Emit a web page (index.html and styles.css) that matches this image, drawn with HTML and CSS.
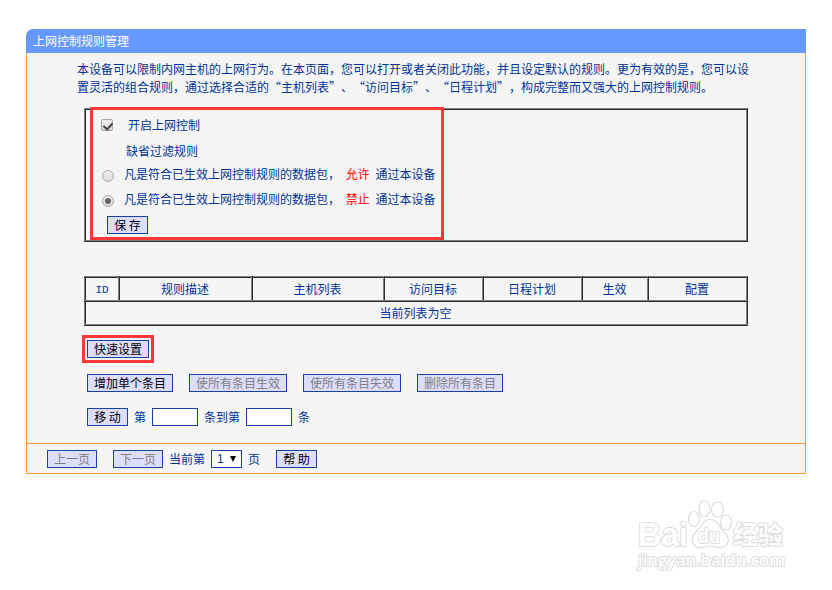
FILE: index.html
```
<!DOCTYPE html>
<html lang="zh-CN">
<head>
    <meta charset="UTF-8">
    <title>上网控制规则管理</title>
    <link rel="stylesheet" href="styles.css">
</head>
<body>

<main class="panel">
    <h1 class="title">上网控制规则管理</h1>
    <div class="content">
        <p class="intro">本设备可以限制内网主机的上网行为。在本页面，您可以打开或者关闭此功能，并且设定默认的规则。更为有效的是，您可以设<br>置灵活的组合规则，通过选择合适的“主机列表”、“访问目标”、“日程计划”，构成完整而又强大的上网控制规则。</p>

        <form class="settings">
            <label class="line enable"><input type="checkbox" class="check" checked>开启上网控制</label>
            <div class="line default">缺省过滤规则</div>
            <label class="line rule"><input type="radio" name="rule" class="radio">凡是符合已生效上网控制规则的数据包， <b>允许</b> 通过本设备</label>
            <label class="line rule"><input type="radio" name="rule" class="radio" checked>凡是符合已生效上网控制规则的数据包， <b>禁止</b> 通过本设备</label>
            <button type="button" class="btn w2 save">保 存</button>
            <span class="mark mark-form"></span>
        </form>

        <table class="rules">
            <colgroup>
                <col class="c-id"><col class="c-desc"><col class="c-host"><col class="c-mid"><col class="c-mid"><col class="c-on"><col class="c-last">
            </colgroup>
            <tr>
                <td class="mono">ID</td>
                <td>规则描述</td>
                <td>主机列表</td>
                <td>访问目标</td>
                <td>日程计划</td>
                <td>生效</td>
                <td>配置</td>
            </tr>
            <tr>
                <td colspan="7">当前列表为空</td>
            </tr>
        </table>

        <div class="quick">
            <button type="button" class="btn w4">快速设置</button>
            <span class="mark mark-quick"></span>
        </div>
        <div class="actions">
            <button type="button" class="btn w6">增加单个条目</button>
            <button type="button" class="btn w7" disabled>使所有条目生效</button>
            <button type="button" class="btn w7" disabled>使所有条目失效</button>
            <button type="button" class="btn w6" disabled>删除所有条目</button>
        </div>
        <div class="move">
            <button type="button" class="btn w2">移 动</button>
            <span>第</span>
            <input type="text" class="num">
            <span>条到第</span>
            <input type="text" class="num">
            <span>条</span>
        </div>
    </div>

    <div class="footer">
        <button type="button" class="btn w3 prev" disabled>上一页</button>
        <button type="button" class="btn w3" disabled>下一页</button>
        <span>当前第</span>
        <div class="page">1<i class="arrow"></i></div>
        <span>页</span>
        <button type="button" class="btn w2 help">帮 助</button>
    </div>
</main>

<svg class="watermark" width="160" height="85" viewBox="0 0 160 85">
    <g class="paw">
        <ellipse cx="64" cy="29" rx="5.5" ry="7.5"/>
        <ellipse cx="74.5" cy="18.5" rx="5.5" ry="8"/>
        <ellipse cx="87.5" cy="19.5" rx="6" ry="7.5"/>
        <ellipse cx="96" cy="32.500" rx="5.5" ry="7.500"/>
        <path d="M80 29.500 C88 29.500 89 37 94 42 C101 49 99 57 90 57.500 C86 58 84 56 80 56 C76 56 73 58 69 57.500 C61 56 60 48 66 42 C72 36 73 29.500 80 29.500Z"/>
    </g>
    <g class="words">
        <text x="8" y="56" class="wm-bai" textLength="50" lengthAdjust="spacingAndGlyphs">Bai</text>
        <text x="68" y="53" class="wm-du" textLength="22" lengthAdjust="spacingAndGlyphs">du</text>
        <text x="103" y="54" class="wm-cn" textLength="50" lengthAdjust="spacingAndGlyphs">经验</text>
        <text x="8" y="76" class="wm-url" textLength="147" lengthAdjust="spacingAndGlyphs">jingyan.baidu.com</text>
    </g>
</svg>

</body>
</html>
```
FILE: styles.css
```
* {
    box-sizing: border-box;
}
body {
    margin: 0;
    padding: 29px 26px 0;
    background-color: white;
    color: #039;
    font-family: "Noto Sans CJK SC", "Liberation Sans", sans-serif;
    font-size: 12px;
    line-height: 18px;
    word-spacing: 3px;
    text-spacing-trim: space-all;
}
.panel {
    width: 780px;
    height: 445px;
}
.title {
    height: 24px;
    margin: 0;
    padding-left: 7px;
    border-top-left-radius: 7px;
    background-color: #69f;
    color: white;
    font-size: 12px;
    font-weight: normal;
    line-height: 24px;
}
.content {
    height: 390px;
    padding: 7px 57px 0;
    border: 1px solid #f93;
    border-width: 0 1px;
    background-color: #f5f5f5;
}
.intro {
    margin: 0 -10px 12px -7px;
    white-space: nowrap;
}
.settings {
    position: relative;
    width: 664px;
    height: 134px;
    padding-top: 5px;
    border: 2px ridge gray;
}
.line {
    display: flex;
    align-items: center;
    height: 24px;
    white-space: pre;
}
.enable {
    height: 20px;
    padding-left: 15px;
}
.default {
    height: 31px;
    padding-left: 40px;
}
.rule {
    height: 25px;
    padding: 0 0 10px 16px;
}
.rule b {
    color: red;
    font-weight: normal;
}
.check,
.radio {
    appearance: none;
    position: relative;
    width: 12px;
    height: 12px;
    margin: 0 15px 0 0;
    border: 1px solid #aaa;
    border-radius: 2px;
    background: linear-gradient(#eee, #ddd);
}
.radio {
    top: 2px;
    margin-right: 10px;
    border-radius: 50%;
}
.radio:checked::after {
    content: "";
    position: absolute;
    top: 2px;
    left: 2px;
    width: 6px;
    height: 6px;
    border-radius: 50%;
    background-color: #666;
}
.check:checked::after {
    content: "";
    position: absolute;
    top: 1px;
    left: 3px;
    width: 4px;
    height: 7px;
    border: solid #444;
    border-width: 0 2px 2px 0;
    transform: rotate(42deg);
}
.btn {
    flex: none;
    height: 18px;
    margin: 0;
    padding: 0;
    border: 1px solid #1c3fae;
    background-color: #ddf;
    color: black;
    font: inherit;
    line-height: 16px;
    word-spacing: 0;
    white-space: nowrap;
}
.btn:disabled {
    color: gray;
}
.w2 { width: 41px; }
.w3 { width: 50px; }
.w4 { width: 62px; }
.w6 { width: 86px; }
.w7 { width: 98px; }
.save {
    display: block;
    margin: 0 0 0 21px;
}
.mark {
    position: absolute;
    border: 3px solid #ff3739;
    pointer-events: none;
}
.mark-form {
    top: -3px;
    left: 4px;
    width: 354px;
    height: 133px;
}
.mark-quick {
    top: -5px;
    left: -2px;
    width: 72px;
    height: 28px;
}
.rules {
    width: 664px;
    margin-top: 34px;
    border-collapse: collapse;
    table-layout: fixed;
    border: 2px ridge gray;
}
.rules td {
    height: 24px;
    padding: 0 1px 0 0;
    border: 2px ridge gray;
    text-align: center;
}
.c-id { width: 34px; }
.c-desc { width: 133px; }
.c-host { width: 132px; }
.c-mid { width: 99px; }
.c-on { width: 66px; }
.c-last { width: 99px; }
.rules .mono {
    padding: 2px 0 0;
    font-family: "Liberation Mono", monospace;
    font-size: 11px;
}
.quick {
    position: relative;
    display: flex;
    margin-top: 14px;
    padding-left: 3px;
}
.actions {
    display: flex;
    gap: 16px;
    margin-top: 16px;
    padding-left: 3px;
}
.move {
    display: flex;
    gap: 6px;
    margin-top: 16px;
    padding-left: 3px;
}
.num {
    width: 46px;
    height: 18px;
    border: 1px solid #1c3fae;
    background-color: white;
}
.footer {
    display: flex;
    gap: 6px;
    height: 31px;
    padding: 6px 0 0 20px;
    border: 1px solid #f93;
    background-color: #f5f5f5;
}
.prev {
    margin-right: 10px;
}
.page {
    display: flex;
    align-items: center;
    gap: 6px;
    width: 31px;
    height: 18px;
    padding-left: 5px;
    border: 1px solid #1c3fae;
    background-color: white;
    font-family: "Liberation Sans", sans-serif;
}
.arrow {
    border: solid transparent;
    border-width: 6px 3px 0;
    border-top-color: black;
}
.help {
    margin-left: 10px;
}
.watermark {
    position: absolute;
    top: 490px;
    left: 630px;
}
.paw {
    fill: white;
    stroke: #dcdcdc;
    stroke-width: 1.2;
}
.words {
    fill: white;
    stroke: #dcdcdc;
    stroke-width: 2;
    stroke-linejoin: round;
    paint-order: stroke;
    word-spacing: 0;
}
.wm-bai,
.wm-du {
    font-family: "Liberation Sans", sans-serif;
    font-weight: bold;
}
.wm-bai { font-size: 33px; }
.wm-du { font-size: 21px; }
.wm-cn {
    font-family: "Noto Sans CJK SC", sans-serif;
    font-size: 25px;
    font-weight: bold;
}
.wm-url {
    font-family: "Open Sans", sans-serif;
    font-size: 17px;
    font-weight: 600;
}
```
